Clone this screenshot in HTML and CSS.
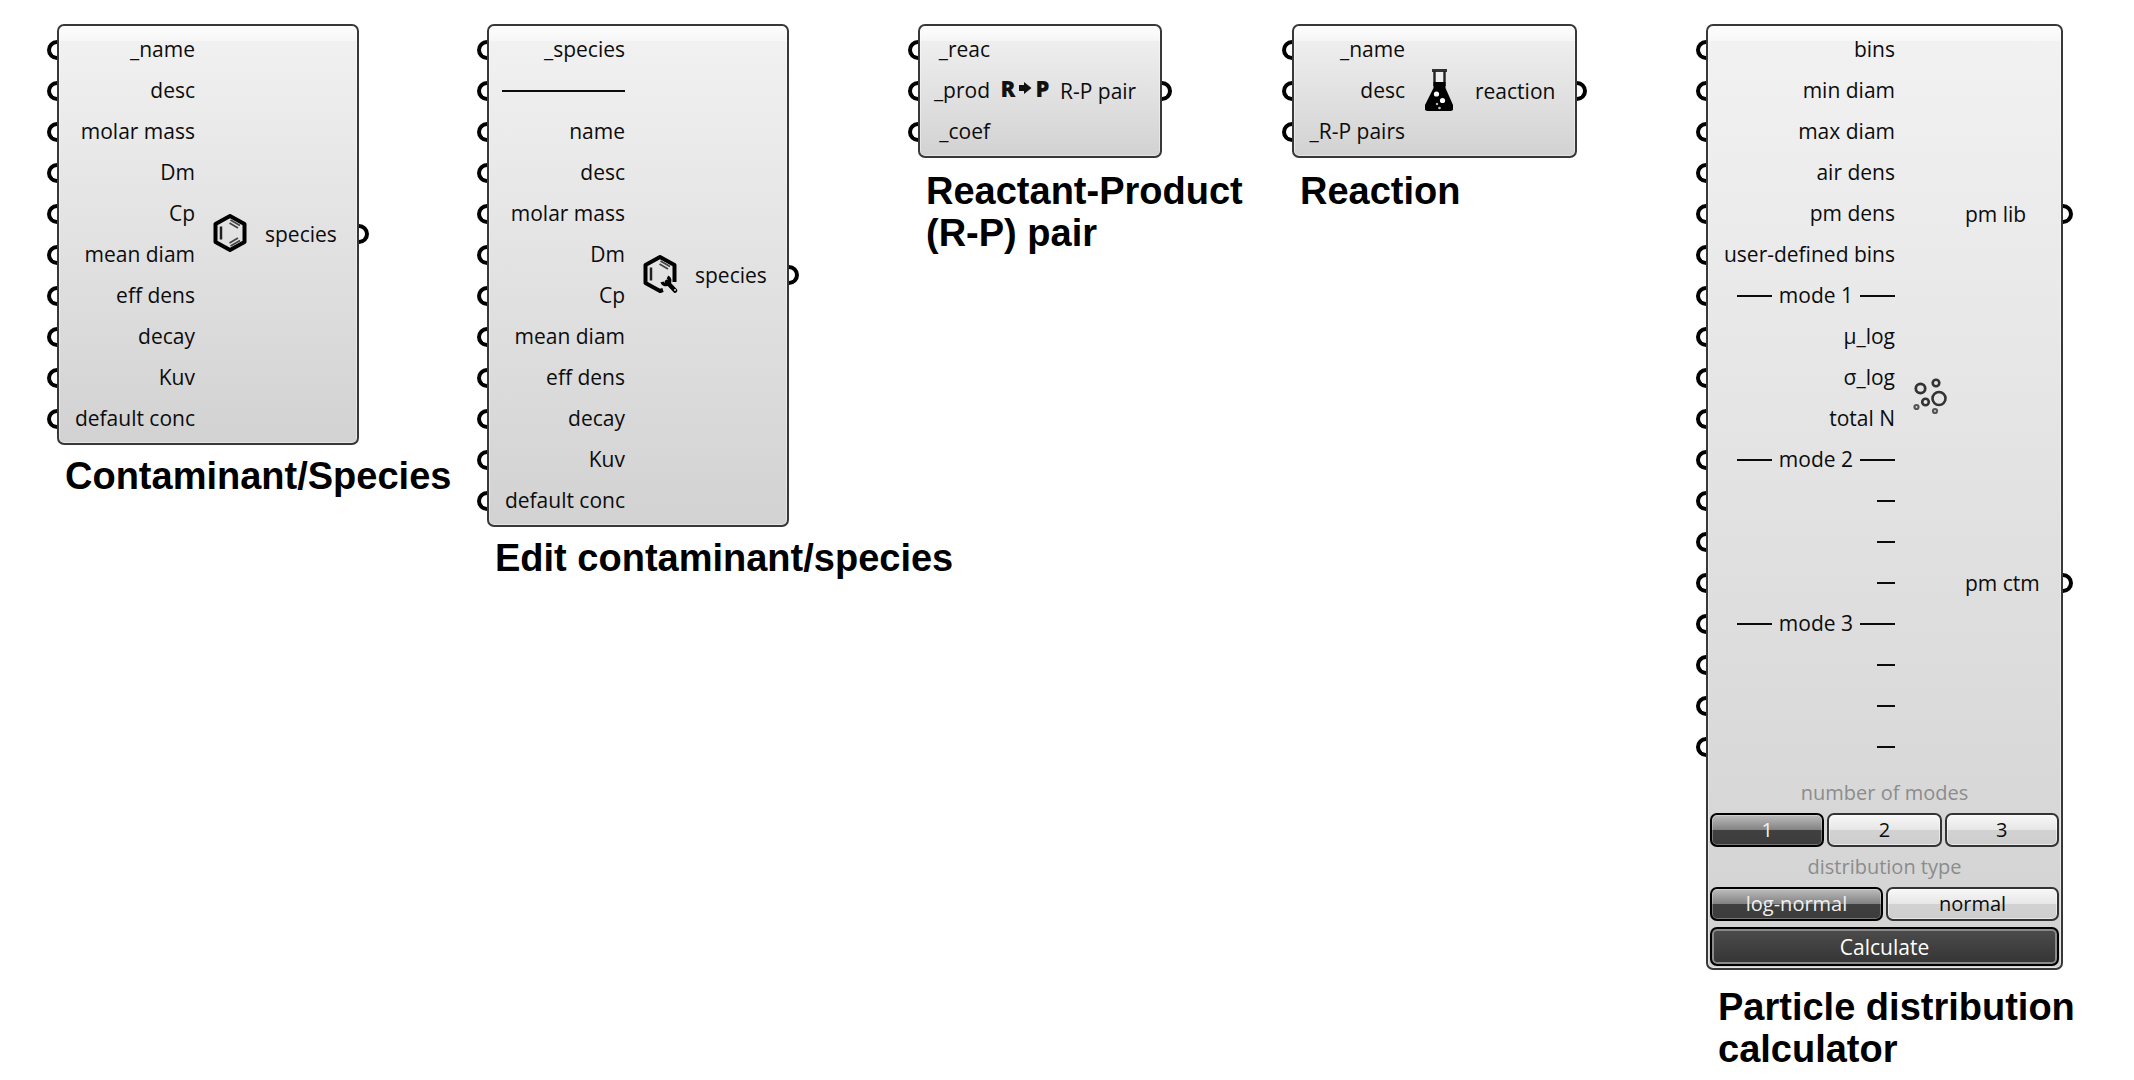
FILE: index.html
```html
<!DOCTYPE html>
<html lang="en">
<head>
<meta charset="utf-8">
<title>Contaminant components</title>
<link rel="stylesheet" href="styles.css">
</head>
<body>
<main class="canvas">

  <figure class="component component--species">
    <div class="node">
      <div class="node-body">
        <ul class="inputs">
          <li>_name</li>
          <li>desc</li>
          <li>molar mass</li>
          <li>Dm</li>
          <li>Cp</li>
          <li>mean diam</li>
          <li>eff dens</li>
          <li>decay</li>
          <li>Kuv</li>
          <li>default conc</li>
        </ul>
        <div class="icon">
          <svg width="36" height="40" viewBox="0 0 36 40" fill="none" stroke="#000" aria-hidden="true">
            <path d="M18 3 L32.500 11 V29 L18 37 L3.500 29 V11 Z" stroke-width="4" stroke-linejoin="round"/>
            <path d="M9 13.500 V26.500" stroke="#222" stroke-width="2.500"/>
            <path d="M18.500 7 L28 12.500 M17.500 10 L26 15 M18.500 33 L28 27.500 M17.500 30 L26 25" stroke="#444" stroke-width="1.800"/>
          </svg>
        </div>
        <ul class="outputs"><li>species</li></ul>
      </div>
    </div>
    <figcaption>Contaminant/Species</figcaption>
  </figure>

  <figure class="component component--edit">
    <div class="node">
      <div class="node-body">
        <ul class="inputs">
          <li>_species</li>
          <li><span class="rule rule--full"></span></li>
          <li>name</li>
          <li>desc</li>
          <li>molar mass</li>
          <li>Dm</li>
          <li>Cp</li>
          <li>mean diam</li>
          <li>eff dens</li>
          <li>decay</li>
          <li>Kuv</li>
          <li>default conc</li>
        </ul>
        <div class="icon">
          <svg width="36" height="40" viewBox="0 0 36 40" fill="none" stroke="#000" aria-hidden="true">
            <path d="M21 36 L18 37 L3.500 29 V11 L18 3 L32.500 11 V28" stroke-width="4" stroke-linejoin="round"/>
            <path d="M9 13.500 V26.500" stroke="#222" stroke-width="2.500"/>
            <path d="M18.500 7 L28 12.500 M17.500 10 L26 15" stroke="#444" stroke-width="1.800"/>
            <path d="M25 28 L33 36.500" stroke-width="4.500" stroke-linecap="round"/>
            <path d="M25.500 23 A4 4 0 1 1 20 28" stroke-width="3.500"/>
            <circle cx="33" cy="36" r="1" fill="#ddd" stroke="none"/>
          </svg>
        </div>
        <ul class="outputs"><li>species</li></ul>
      </div>
    </div>
    <figcaption>Edit contaminant/species</figcaption>
  </figure>

  <figure class="component component--pair">
    <div class="node">
      <div class="node-body">
        <ul class="inputs">
          <li>_reac</li>
          <li>_prod</li>
          <li>_coef</li>
        </ul>
        <div class="icon icon--letters">
          <span>R</span>
          <svg width="14" height="14" viewBox="0 0 14 14" aria-hidden="true"><path d="M1 4 H6 V1 L13.500 7 L6 13 V10 H1 Z" fill="#111"/></svg>
          <span>P</span>
        </div>
        <ul class="outputs"><li>R-P pair</li></ul>
      </div>
    </div>
    <figcaption>Reactant-Product<br>(R-P) pair</figcaption>
  </figure>

  <figure class="component component--reaction">
    <div class="node">
      <div class="node-body">
        <ul class="inputs">
          <li>_name</li>
          <li>desc</li>
          <li>_R-P pairs</li>
        </ul>
        <div class="icon">
          <svg width="30" height="44" viewBox="0 0 30 44" aria-hidden="true">
            <path d="M10 3 H19 V16 H10 Z" fill="#eee"/>
            <path d="M7 1 H22 V4 H7 Z" fill="#333"/>
            <path d="M9.500 3 V18 M19.500 3 V18" stroke="#222" stroke-width="2.400"/>
            <path d="M8.500 14 H20.500 V20 L28 37 V42 L26 43 H2 L0 42 V37 L8.500 20 Z" fill="#000"/>
            <circle cx="11.500" cy="26" r="2.600" fill="#fff"/>
            <circle cx="17.500" cy="32.500" r="2.600" fill="#fff"/>
            <circle cx="12" cy="36" r="1.200" fill="#bbb"/>
            <circle cx="14.500" cy="40" r="1.300" fill="#ccc"/>
          </svg>
        </div>
        <ul class="outputs"><li>reaction</li></ul>
      </div>
    </div>
    <figcaption>Reaction</figcaption>
  </figure>

  <figure class="component component--particle">
    <div class="node">
      <div class="node-body">
        <ul class="inputs">
          <li>bins</li>
          <li>min diam</li>
          <li>max diam</li>
          <li>air dens</li>
          <li>pm dens</li>
          <li>user-defined bins</li>
          <li><span class="rule rule--mode"></span>mode 1<span class="rule rule--mode"></span></li>
          <li>μ_log</li>
          <li>σ_log</li>
          <li>total N</li>
          <li><span class="rule rule--mode"></span>mode 2<span class="rule rule--mode"></span></li>
          <li><span class="rule"></span></li>
          <li><span class="rule"></span></li>
          <li><span class="rule"></span></li>
          <li><span class="rule rule--mode"></span>mode 3<span class="rule rule--mode"></span></li>
          <li><span class="rule"></span></li>
          <li><span class="rule"></span></li>
          <li><span class="rule"></span></li>
        </ul>
        <div class="icon">
          <svg width="36" height="40" viewBox="0 0 36 40" fill="none" stroke="#333" aria-hidden="true">
            <circle cx="8.500" cy="11.500" r="4.700" stroke-width="2.800"/>
            <circle cx="24" cy="6" r="3.300" stroke-width="2.600"/>
            <circle cx="27" cy="21.500" r="6.500" stroke-width="2.600"/>
            <circle cx="13.500" cy="25" r="3.300" stroke-width="2.600"/>
            <circle cx="4.500" cy="30" r="2" stroke="#555" stroke-width="2.200"/>
            <circle cx="23" cy="34" r="2" stroke="#555" stroke-width="2.200"/>
          </svg>
        </div>
        <ul class="outputs"><li>pm lib</li><li>pm ctm</li></ul>
      </div>
      <div class="controls">
        <p class="control-label" id="modes-label">number of modes</p>
        <div class="segments" role="group" aria-labelledby="modes-label">
          <button type="button" class="segment segment--on" aria-pressed="true">1</button>
          <button type="button" class="segment" aria-pressed="false">2</button>
          <button type="button" class="segment" aria-pressed="false">3</button>
        </div>
        <p class="control-label" id="type-label">distribution type</p>
        <div class="segments" role="group" aria-labelledby="type-label">
          <button type="button" class="segment segment--on" aria-pressed="true">log-normal</button>
          <button type="button" class="segment" aria-pressed="false">normal</button>
        </div>
        <button type="button" class="calculate">Calculate</button>
      </div>
    </div>
    <figcaption>Particle distribution<br>calculator</figcaption>
  </figure>

</main>
</body>
</html>
```
FILE: styles.css
```css
*,
*::before,
*::after {
  box-sizing: border-box;
}

body {
  margin: 0;
  background: #fff;
  color: #0c0c0c;
  font-family: "Open Sans", "Noto Sans", sans-serif;
  font-size: 21px;
}

ul,
p,
figure {
  margin: 0;
  padding: 0;
  list-style: none;
}

.canvas {
  display: grid;
  grid-template-columns: 430fr 431fr 374fr 414fr 428fr;
  align-items: start;
  padding: 24px 0 0 57px;
}

/* Component and its caption */
.component {
  --node-width: 302px;
  --inputs-width: 136px;
  min-width: 0;
}

.component--pair {
  --node-width: 244px;
  --inputs-width: 70px;
}

.component--reaction {
  --node-width: 285px;
  --inputs-width: 111px;
}

.component--particle {
  --node-width: 357px;
  --inputs-width: 187px;
}

figcaption {
  padding: 10px 0 0 8px;
  color: #000;
  font: bold 38px/42px "Liberation Sans", Arial, sans-serif;
  white-space: nowrap;
}

.component--pair figcaption,
.component--reaction figcaption {
  padding-top: 12px;
}

.component--particle figcaption {
  padding: 16px 0 0 12px;
}

/* Node capsule */
.node {
  width: var(--node-width);
  border: 2px solid #383838;
  border-radius: 7px;
  background:
    linear-gradient(rgba(255, 255, 255, 0.9), rgba(255, 255, 255, 0.4)) top / 100% 15px no-repeat,
    linear-gradient(#f2f2f2, #d2d2d2);
  box-shadow: inset 0 0 0 1px rgba(255, 255, 255, 0.4);
}

.node-body {
  display: grid;
  grid-template-columns: var(--inputs-width) 70px 1fr;
  padding: 3px 0 4px;
}

.inputs li,
.outputs li {
  position: relative;
  display: flex;
  line-height: 40px;
  white-space: nowrap;
}

.inputs li {
  gap: 7px;
  justify-content: flex-end;
  height: 41px;
}

.outputs {
  display: flex;
  flex-direction: column;
}

.outputs li {
  flex: 1;
  align-items: center;
}

/* Half-round grips on the node's edges */
.inputs li::before,
.outputs li::after {
  content: "";
  position: absolute;
  top: calc(50% - 10px);
  width: 10px;
  height: 20px;
  border: 4px solid #000;
  background: #fff;
}

.inputs li::before {
  left: -12px;
  border-right: 0;
  border-radius: 10px 0 0 10px;
}

.outputs li::after {
  right: -12px;
  border-left: 0;
  border-radius: 0 10px 10px 0;
}

.rule {
  align-self: center;
  width: 18px;
  height: 2px;
  background: #0c0c0c;
}

.rule--mode {
  width: 35px;
}

.rule--full {
  width: 123px;
}

.icon {
  display: flex;
  align-items: center;
  justify-content: center;
  padding-bottom: 2px;
}

.icon--letters {
  gap: 3px;
  padding-bottom: 6px;
  color: #111;
  font-size: 22px;
  font-weight: 800;
}

/* Controls under the ports */
.controls {
  padding: 2px 2px 2px;
}

.control-label {
  color: #8c8c8c;
  font-size: 20px;
  line-height: 40px;
  text-align: center;
}

.segments {
  display: flex;
  gap: 3px;
}

.segment,
.calculate {
  height: 34px;
  padding: 0;
  border: 2px solid #333;
  border-radius: 7px;
  color: #0c0c0c;
  font: inherit;
  line-height: 28px;
}

.segment {
  flex: 1;
  background: linear-gradient(#f8f8f8, #e6e6e6 50%, #d2d2d2 50%, #cecece);
  box-shadow: inset 0 0 0 1px rgba(255, 255, 255, 0.5);
  font-size: 20px;
}

.segment--on {
  border-color: #000;
  background: linear-gradient(#bdbdbd, #828282 50%, #404040 50%, #3c3c3c);
  box-shadow: inset 0 0 0 1px rgba(255, 255, 255, 0.3);
  color: #f0f0f0;
}

.calculate {
  display: block;
  width: 100%;
  height: 39px;
  margin-top: 6px;
  border-color: #000;
  background: linear-gradient(#4c4c4c, #343434);
  box-shadow: inset 0 0 0 2px #8a8a8a;
  color: #fff;
}
```
